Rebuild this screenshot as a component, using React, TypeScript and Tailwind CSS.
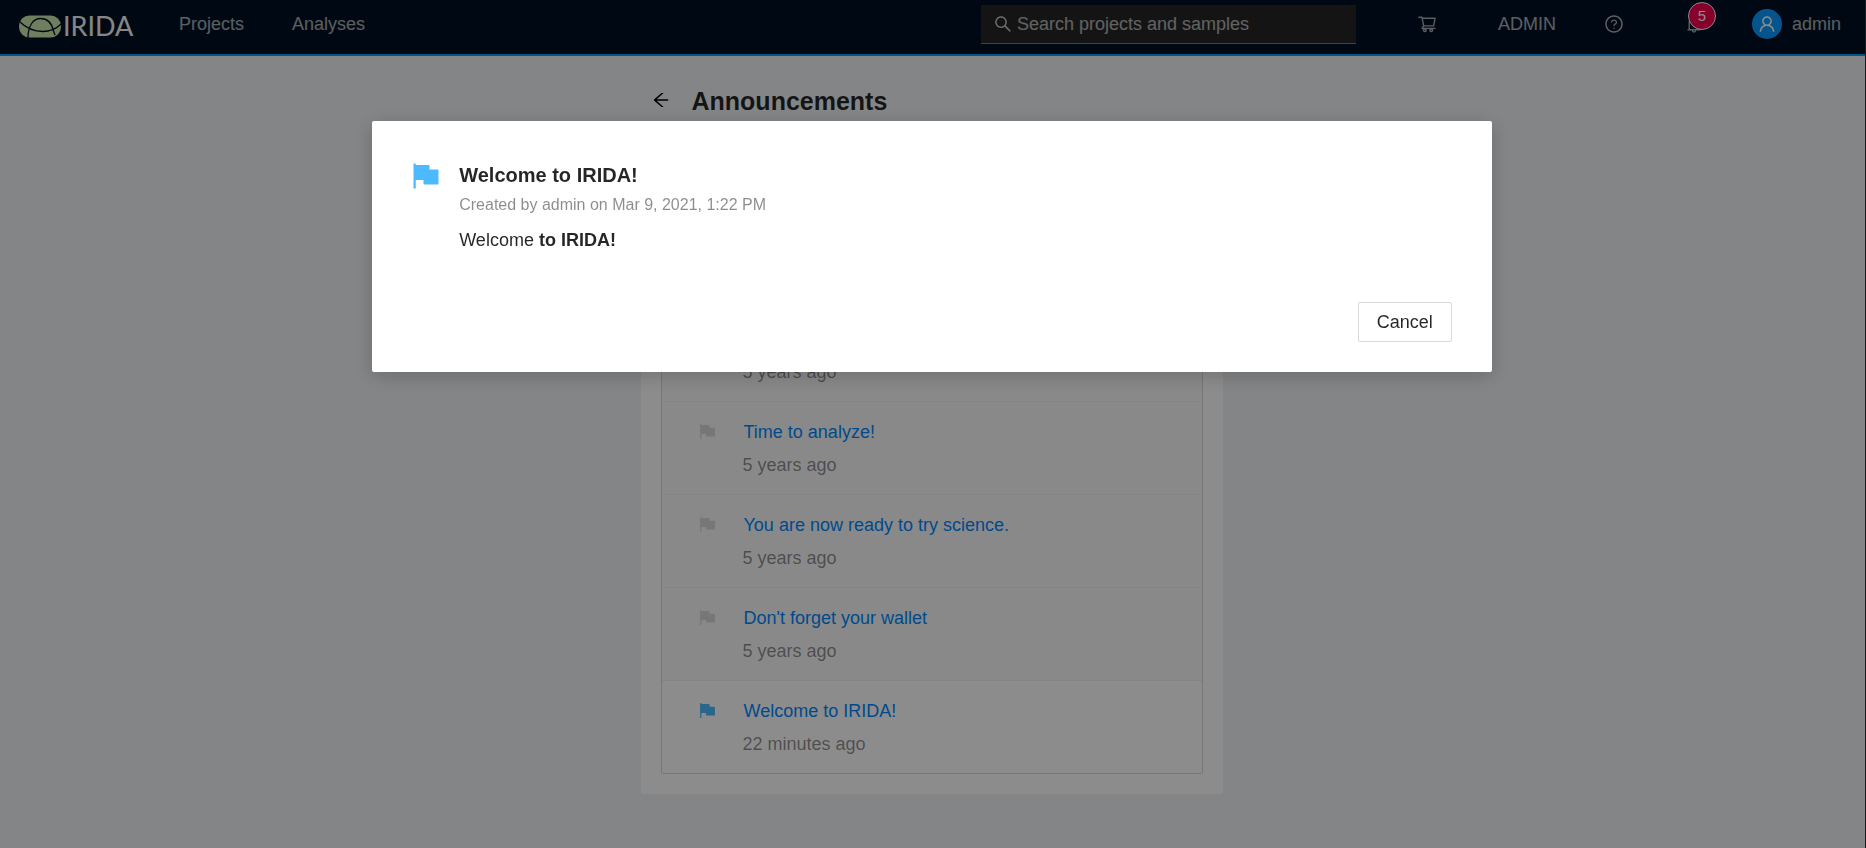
import {
  AiFillFlag,
  AiOutlineArrowLeft,
  AiOutlineBell,
  AiOutlineQuestionCircle,
  AiOutlineSearch,
  AiOutlineShoppingCart,
  AiOutlineUser,
} from "react-icons/ai";

type Announcement = { title: string; age: string; priority?: boolean; read?: boolean };

const announcements: Announcement[] = [
  { title: "", age: "5 years ago", read: true },
  { title: "Time to analyze!", age: "5 years ago", read: true },
  { title: "You are now ready to try science.", age: "5 years ago", read: true },
  { title: "Don't forget your wallet", age: "5 years ago", read: true },
  { title: "Welcome to IRIDA!", age: "22 minutes ago", priority: true },
];

function Logo() {
  return (
    <span className="flex items-center gap-0.5">
      <svg className="h-[23px] w-[42px] shrink-0" viewBox="0 0 42 23" aria-hidden="true">
        <rect x="0" y="0.5" width="42" height="22" rx="10.5" fill="#cae6ae" />
        <path d="M0.500 6.500C8 14 16 16.500 24 16.500s13-2.500 18-7.500" fill="none" stroke="#001223" strokeWidth="1.3" />
        <path d="M9 23C9 11 14 3.500 21.500 3.500S33 9 34.500 16l1.500 4" fill="none" stroke="#001223" strokeWidth="1.3" />
      </svg>
      <span className="font-['Lato',sans-serif] text-[27px] leading-6 text-[#f4f4f4]">IRIDA</span>
    </span>
  );
}

function Header() {
  return (
    <header className="flex h-14 items-center border-b-2 border-[#0a9cff] bg-[#001223] pb-1.5 text-white/65">
      <a href="#home" className="mt-1 ml-[19px] w-[118px]">
        <Logo />
      </a>
      <nav className="ml-[42px] flex gap-12">
        <a href="#projects">Projects</a>
        <a href="#analyses">Analyses</a>
      </nav>
      <label className="ml-auto flex h-[39px] w-[375px] items-center border-b border-[#0a9cff] bg-[#262626] pl-3">
        <AiOutlineSearch className="size-5 text-white/75" />
        <input
          type="search"
          aria-label="Search projects and samples"
          placeholder="Search projects and samples"
          className="ml-1 min-w-0 flex-1 bg-transparent outline-none placeholder:text-white/65"
        />
      </label>
      <a href="#cart" aria-label="Cart" className="ml-[61px]">
        <AiOutlineShoppingCart className="size-5" />
      </a>
      <a href="#admin" className="ml-[61px]">
        ADMIN
      </a>
      <a href="#help" aria-label="Help" className="ml-12">
        <AiOutlineQuestionCircle className="size-5" />
      </a>
      <a href="#announcements" aria-label="Announcements" className="relative ml-[60px]">
        <AiOutlineBell className="size-5" />
        <span className="absolute -top-3 left-1 flex size-7 items-center justify-center rounded-full border border-white bg-[#f5004f] text-[15px] text-white">
          5
        </span>
      </a>
      <a href="#account" className="mr-6 ml-12 flex items-center gap-2.5">
        <span className="flex size-[30px] items-center justify-center rounded-full bg-[#0a9cff] text-white">
          <AiOutlineUser className="size-5" />
        </span>
        admin
      </a>
    </header>
  );
}

function AnnouncementRow({ title, age, priority, read }: Announcement) {
  return (
    <li
      className={`flex h-[93px] items-start border-b border-[#f0f0f0] px-9 pt-4 last:h-[92px] last:border-b-0 ${read ? "bg-[#fafafa]" : ""}`}
    >
      <AiFillFlag className={`mt-1 size-[19px] ${priority ? "text-[#4dbaff]" : "text-[#d9d9d9]"}`} />
      <div className="ml-[26px]">
        <h2 className="h-[33px] pl-px leading-[28px]">
          <a href="#announcement" className="text-[#0088ff]">
            {title}
          </a>
        </h2>
        <p className="leading-[28px] text-black/45">{age}</p>
      </div>
    </li>
  );
}

function AnnouncementDialog() {
  return (
    <div className="fixed inset-0 flex items-start justify-center bg-black/45 pt-[121px]">
      <section
        role="dialog"
        aria-modal="true"
        aria-labelledby="dialog-title"
        className="mr-0.5 w-3/5 rounded-[2px] bg-white px-10 pt-[39px] pb-[30px] shadow-[0_4px_20px_rgba(0,0,0,0.2)]"
      >
        <div className="flex items-start">
          <AiFillFlag className="-ml-0.5 size-8 shrink-0 text-[#4dbaff]" />
          <div className="ml-[17px]">
            <h2 id="dialog-title" className="text-xl leading-[30px] font-bold text-black/85">
              Welcome to IRIDA!
            </h2>
            <p className="text-base leading-[30px] text-black/45">Created by admin on Mar 9, 2021, 1:22 PM</p>
            <p className="mt-1 leading-[32px] text-black/85">
              Welcome <strong>to IRIDA!</strong>
            </p>
          </div>
        </div>
        <div className="mt-[46px] flex justify-end">
          <button type="button" className="h-10 rounded-[2px] border border-[#d9d9d9] px-[18px] text-black/85">
            Cancel
          </button>
        </div>
      </section>
    </div>
  );
}

export default function App() {
  return (
    <div className="min-h-screen border-r border-[#333333] bg-[#f0f2f5] font-['Liberation_Sans',Arial,sans-serif] text-lg">
      <Header />
      <main className="mx-auto w-[584px] pr-0.5 pb-10">
        <div className="flex items-center gap-[21px] pt-[25px] pl-2.5">
          <button type="button" aria-label="Back" className="pb-0.5">
            <AiOutlineArrowLeft className="size-5 text-black" />
          </button>
          <h1 className="text-[25px] leading-10 font-bold text-black/85">Announcements</h1>
        </div>
        <div className="mt-4 bg-white px-5 pt-[171px] pb-5">
          <ul className="rounded-[2px] border border-[#d9d9d9]">
            {announcements.map((item, index) => (
              <AnnouncementRow key={index} {...item} />
            ))}
          </ul>
        </div>
      </main>
      <AnnouncementDialog />
    </div>
  );
}
